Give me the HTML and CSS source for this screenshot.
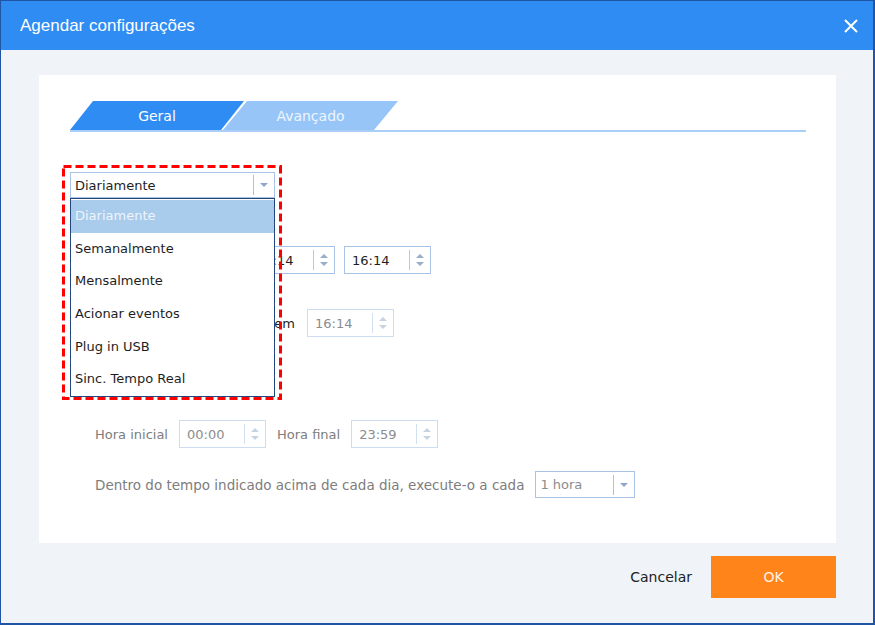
FILE: index.html
```html
<!DOCTYPE html>
<html lang="pt">
<head>
  <meta charset="UTF-8" />
  <title>Agendar configurações</title>
  <link rel="stylesheet" href="styles.css">
</head>
<body>

<div class="dialog">
  <div class="titlebar">
    <span class="title">Agendar configurações</span>
    <svg class="close" width="14" height="14" viewBox="0 0 14 14">
      <path d="M1 1 L13 13 M13 1 L1 13" stroke="#fff" stroke-width="2" fill="none" />
    </svg>
  </div>

  <div class="body">
    <div class="panel">
      <div class="tabs">
        <div class="tab active">Geral</div>
        <div class="tab">Avançado</div>
      </div>

      <div class="content">
        <div class="combo-wrap">
          <div class="combo main-combo">
            <span class="combo-text">Diariamente</span>
            <span class="combo-arrow"><i class="tri-down"></i></span>
          </div>
          <ul class="dropdown">
            <li class="selected">Diariamente</li>
            <li>Semanalmente</li>
            <li>Mensalmente</li>
            <li>Acionar eventos</li>
            <li>Plug in USB</li>
            <li>Sinc. Tempo Real</li>
          </ul>
          <svg class="focus-mark" width="220" height="235" viewBox="0 0 220 235">
            <rect x="1.5" y="1.5" width="217" height="232" fill="none" stroke="#ff0000" stroke-width="3" stroke-dasharray="8 4" />
          </svg>
        </div>

        <div class="row row-start">
          <span class="label wide">Iniciar em</span>
          <div class="spin"><span class="val">16:14</span><span class="arrows"><i class="up"></i><i class="down"></i></span></div>
          <div class="spin"><span class="val">16:14</span><span class="arrows"><i class="up"></i><i class="down"></i></span></div>
        </div>

        <div class="row row-once">
          <span class="label wider">Executar uma vez em</span>
          <div class="spin disabled"><span class="val">16:14</span><span class="arrows"><i class="up"></i><i class="down"></i></span></div>
        </div>

        <div class="row row-hours muted">
          <span>Hora inicial</span>
          <div class="spin disabled"><span class="val">00:00</span><span class="arrows"><i class="up"></i><i class="down"></i></span></div>
          <span>Hora final</span>
          <div class="spin disabled"><span class="val">23:59</span><span class="arrows"><i class="up"></i><i class="down"></i></span></div>
        </div>

        <div class="row row-every muted">
          <span class="every-text">Dentro do tempo indicado acima de cada dia, execute-o a cada</span>
          <div class="combo small-combo disabled">
            <span class="combo-text">1 hora</span>
            <span class="combo-arrow"><i class="tri-down"></i></span>
          </div>
        </div>
      </div>
    </div>

    <div class="footer">
      <span class="cancel">Cancelar</span>
      <button class="ok">OK</button>
    </div>
  </div>
</div>

</body>
</html>
```

FILE: styles.css
```css
* { box-sizing: border-box; }
html, body {
  margin: 0;
  padding: 0;
  background: #fff;
}
body {
  font-family: 'DejaVu Sans', sans-serif;
  font-size: 13px;
  color: #1e1e1e;
}
.dialog {
  width: 875px;
  height: 625px;
  border: 1px solid #1f55a3;
  border-width: 1px 2px 2px 1px;
  background: #f0f4f9;
  display: flex;
  flex-direction: column;
  overflow: hidden;
}
.titlebar {
  height: 49px;
  background: #2f8cf3;
  display: flex;
  align-items: center;
  justify-content: space-between;
  padding: 0 15px 0 19px;
  flex-shrink: 0;
}
.title {
  color: #fff;
  font-family: 'Liberation Sans', sans-serif;
  font-size: 17px;
}
.body {
  flex: 1;
  padding: 25px 37px 0 38px;
  display: flex;
  flex-direction: column;
}
.panel {
  background: #fff;
  height: 468px;
  padding: 26px 30px 0 31px;
}

/* tabs */
.tabs {
  display: flex;
  height: 31px;
  border-bottom: 2px solid #a9cff9;
}
.tab {
  height: 29px;
  width: 174px;
  display: flex;
  align-items: center;
  justify-content: center;
  font-size: 14px;
  color: #eef5fe;
  background: #97c5f8;
  clip-path: polygon(23px 0, 100% 0, calc(100% - 23px) 100%, 0 100%);
}
.tab.active {
  background: #2f8cf3;
  color: #fff;
}
.tab + .tab {
  margin-left: -21px;
  width: 175px;
  clip-path: polygon(24px 0, 100% 0, calc(100% - 24px) 100%, 0 100%);
}

.content {
  padding-top: 40px;
}

/* combo boxes */
.combo {
  display: flex;
  align-items: center;
  background: #fff;
  border: 1px solid #a9c3e6;
  height: 26px;
  padding-left: 4px;
}
.combo-text { flex: 1; }
.combo-arrow {
  width: 21px;
  height: 20px;
  border-left: 1px solid #a9c3e6;
  display: flex;
  align-items: center;
  justify-content: center;
}
.tri-down {
  border-left: 4px solid transparent;
  border-right: 4px solid transparent;
  border-top: 4px solid #8ba8cb;
}
.combo-wrap {
  position: relative;
  width: 205px;
}
.dropdown {
  position: absolute;
  top: 100%;
  left: 0;
  width: 100%;
  margin: 0;
  padding: 1px 0 0 0;
  list-style: none;
  background: #fff;
  border: 1px solid #24467e;
  z-index: 2;
}
.dropdown li {
  height: 32.7px;
  line-height: 32.7px;
  padding-left: 4px;
}
.dropdown li.selected {
  background: #a9cbec;
  color: #eef4fb;
}
.focus-mark {
  position: absolute;
  top: -7px;
  left: -8px;
  z-index: 3;
}

/* rows */
.row {
  display: flex;
  align-items: center;
  gap: 12px;
}
.label.wide { width: 169px; text-align: right; }
.label.wider { width: 225px; text-align: right; }
.row-start { margin-top: 48px; gap: 9px; }
.row-once { margin-top: 35px; }
.row-hours { margin-top: 83px; padding-left: 25px; gap: 11px; }
.row-every { margin-top: 23px; padding-left: 25px; gap: 11px; }
.every-text { font-size: 13.5px; }
.muted { color: #7d7d7d; }

.spin {
  display: flex;
  align-items: center;
  width: 87px;
  height: 28px;
  border: 1px solid #a9c3e6;
  background: #fff;
  padding-left: 7px;
  color: #1e1e1e;
}
.spin .val {
  flex: 1;
  white-space: nowrap;
  overflow: hidden;
}
.spin .arrows {
  width: 21px;
  height: 20px;
  border-left: 1px solid #b3c9e6;
  display: flex;
  flex-direction: column;
  align-items: center;
  justify-content: center;
  gap: 4px;
}
.arrows .up {
  border-left: 4px solid transparent;
  border-right: 4px solid transparent;
  border-bottom: 4px solid #98aec9;
}
.arrows .down {
  border-left: 4px solid transparent;
  border-right: 4px solid transparent;
  border-top: 4px solid #98aec9;
}
.spin.disabled {
  border-color: #cddcef;
  color: #8c8c8c;
}
.spin.disabled .arrows { border-left-color: #d3e0f0; }
.spin.disabled .up { border-bottom-color: #c6d3e3; }
.spin.disabled .down { border-top-color: #c6d3e3; }
.small-combo {
  width: 100px;
  height: 27px;
}
.small-combo.disabled { color: #8c8c8c; }

/* footer */
.footer {
  display: flex;
  justify-content: flex-end;
  align-items: center;
  gap: 19px;
  margin-top: 13px;
}
.cancel {
  font-size: 14px;
  color: #222;
}
.ok {
  width: 125px;
  height: 42px;
  border: none;
  background: #ff851a;
  color: #fff2e4;
  font-family: 'DejaVu Sans', sans-serif;
  font-size: 14px;
  cursor: pointer;
}
```
